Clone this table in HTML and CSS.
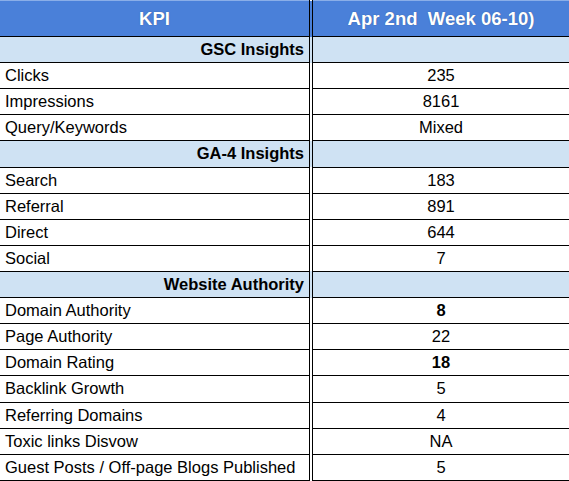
FILE: index.html
```html
<!DOCTYPE html>
<html lang="en">

<head>
  <meta charset="UTF-8">
  <meta name="viewport" content="width=device-width, initial-scale=1.0">
  <title>KPI Report</title>
  <link rel="stylesheet" href="styles.css">
</head>

<body>
  <!-- KPI table -->
  <table class="kpi-table">
    <thead>
      <tr>
        <th>KPI</th>
        <th>Apr 2nd&nbsp; Week 06-10)</th>
      </tr>
    </thead>
    <tbody>
      <tr class="section">
        <td>GSC Insights</td>
        <td></td>
      </tr>
      <tr>
        <td>Clicks</td>
        <td>235</td>
      </tr>
      <tr>
        <td>Impressions</td>
        <td>8161</td>
      </tr>
      <tr>
        <td>Query/Keywords</td>
        <td>Mixed</td>
      </tr>
      <tr class="section">
        <td>GA-4 Insights</td>
        <td></td>
      </tr>
      <tr>
        <td>Search</td>
        <td>183</td>
      </tr>
      <tr>
        <td>Referral</td>
        <td>891</td>
      </tr>
      <tr>
        <td>Direct</td>
        <td>644</td>
      </tr>
      <tr>
        <td>Social</td>
        <td>7</td>
      </tr>
      <tr class="section">
        <td>Website Authority</td>
        <td></td>
      </tr>
      <tr>
        <td>Domain Authority</td>
        <td class="bold">8</td>
      </tr>
      <tr>
        <td>Page Authority</td>
        <td>22</td>
      </tr>
      <tr>
        <td>Domain Rating</td>
        <td class="bold">18</td>
      </tr>
      <tr>
        <td>Backlink Growth</td>
        <td>5</td>
      </tr>
      <tr>
        <td>Referring Domains</td>
        <td>4</td>
      </tr>
      <tr>
        <td>Toxic links Disvow</td>
        <td>NA</td>
      </tr>
      <tr>
        <td>Guest Posts / Off-page Blogs Published</td>
        <td>5</td>
      </tr>
    </tbody>
  </table>
</body>

</html>
```

FILE: styles.css
```css
:root {
  --header-blue: #4a80d9;
  --section-blue: #cfe2f3;
}

* {
  box-sizing: border-box;
  margin: 0;
  padding: 0;
}

body {
  font-family: "Liberation Sans", Arial, sans-serif;
  background: #fff;
  color: #000;
}

.kpi-table {
  width: 569px;
  border-collapse: collapse;
  table-layout: fixed;
  font-size: 16.5px;
}

.kpi-table th,
.kpi-table td {
  border-bottom: 1px solid #000;
  padding: 0 5px;
  white-space: nowrap;
}

/* first column with double divider */
.kpi-table th:first-child,
.kpi-table td:first-child {
  width: 311px;
  border-right: 4px double #000;
}

.kpi-table th {
  height: 36px;
  background: var(--header-blue);
  border-top: 1px solid #8aaee8;
  color: #fff;
  font-size: 18.5px;
  font-weight: bold;
  text-align: center;
  text-shadow: 0 0 1px #2d4f8a;
}

.kpi-table td {
  height: 26.12px;
  text-align: left;
}

.kpi-table td:last-child {
  text-align: center;
}

.kpi-table .section td {
  background: var(--section-blue);
  font-weight: bold;
}

.kpi-table .section td:first-child {
  text-align: right;
}

.bold {
  font-weight: bold;
}
```
